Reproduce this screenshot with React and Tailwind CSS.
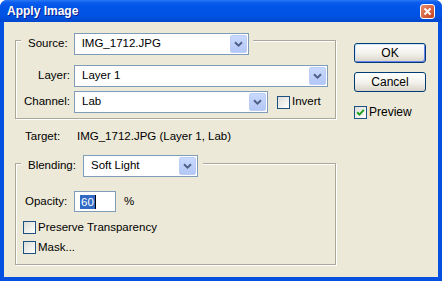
import React from 'react';

const Chevron = () => (
  <svg width="9" height="6" viewBox="0 0 9 6">
    <path d="M1 1.2 L4.5 4.6 L8 1.2" fill="none" stroke="#4d6185" strokeWidth="2" />
  </svg>
);

// XP style combo box with the blue drop button
const Combo = ({ value, className }) => (
  <div className={`flex h-[22px] items-stretch border border-[#7f9db9] bg-white p-[1px] ${className}`}>
    <span className="flex flex-1 items-center truncate pl-[6px] text-black">{value}</span>
    <span className="flex w-[17px] items-center justify-center rounded-[2px] border border-[#bccdf8] bg-gradient-to-b from-[#c9d9fd] to-[#b3c7f6]">
      <Chevron />
    </span>
  </div>
);

const Check = ({ checked }) => (
  <span className="flex h-[13px] w-[13px] shrink-0 items-center justify-center border border-[#1c5180] bg-gradient-to-br from-[#dcdcd7] to-white">
    {checked && (
      <svg width="9" height="9" viewBox="0 0 9 9">
        <path d="M1.2 4.2 L3.5 6.6 L7.8 1.8" fill="none" stroke="#21a121" strokeWidth="2" />
      </svg>
    )}
  </span>
);

const Button = ({ children, primary }) => (
  <button
    className={`flex h-[20px] w-[72px] items-center justify-center rounded-[3px] border border-[#003c74] bg-gradient-to-b from-white via-[#f4f3ee] to-[#d9d4c8] text-[12px] text-black ${
      primary ? 'shadow-[inset_1px_1px_0_#cee7ff,inset_-1px_-1px_0_#6982ee]' : ''
    }`}
  >
    {children}
  </button>
);

export default function App() {
  return (
    <div className="flex h-[281px] w-[442px] flex-col rounded-t-[7px] bg-[#0450e0] font-['Liberation_Sans',Arial,sans-serif] text-[11.5px] text-black">
      {/* title bar */}
      <div className="flex h-[22px] items-center rounded-t-[7px] bg-[linear-gradient(to_bottom,#2a78f5_0%,#0a5ced_12%,#0055e8_30%,#0053e3_70%,#0047cf_100%)] pl-[7px] pr-[7px]">
        <span className="flex-1 text-[12px] font-bold text-white [text-shadow:1px_1px_0_#0a1e8c]">Apply Image</span>
        <span className="flex h-[15px] w-[15px] items-center justify-center rounded-[3px] border border-white bg-gradient-to-br from-[#e88c6c] to-[#c4401d]">
          <svg width="9" height="9" viewBox="0 0 9 9">
            <path d="M1.5 1.5 L7.5 7.5 M7.5 1.5 L1.5 7.5" stroke="#fff" strokeWidth="1.8" />
          </svg>
        </span>
      </div>

      <div className="mx-[4px] mb-[4px] flex flex-1 bg-[#ece9d8]">
        {/* left column */}
        <div className="ml-[11px] flex w-[321px] flex-col">
          {/* source / layer / channel */}
          <div className="mt-[18px] border border-[#aca899] pb-[5px] shadow-[inset_1px_1px_0_#fff,1px_1px_0_#fff]">
            <div className="-mt-[8px] ml-[5px] flex w-fit items-center bg-[#ece9d8] pl-[7px] pr-[4px]">
              <span>Source:</span>
              <Combo value="IMG_1712.JPG" className="ml-[6px] w-[175px]" />
            </div>
            <div className="mt-[10px] flex items-center">
              <span className="w-[54px] text-right">Layer:</span>
              <Combo value="Layer 1" className="ml-[4px] w-[254px]" />
            </div>
            <div className="mt-[4px] flex items-center">
              <span className="w-[54px] text-right">Channel:</span>
              <Combo value="Lab" className="ml-[4px] w-[194px]" />
              <span className="ml-[9px]">
                <Check />
              </span>
              <span className="ml-[2px]">Invert</span>
            </div>
          </div>

          <div className="mt-[11px] flex h-[14px] items-center pl-[10px]">
            <span className="w-[52px]">Target:</span>
            <span>IMG_1712.JPG (Layer 1, Lab)</span>
          </div>

          {/* blending */}
          <div className="mt-[19px] border border-[#aca899] pb-[10px] shadow-[inset_1px_1px_0_#fff,1px_1px_0_#fff]">
            <div className="-mt-[9px] ml-[5px] flex w-fit items-center bg-[#ece9d8] pl-[7px] pr-[5px]">
              <span>Blending:</span>
              <Combo value="Soft Light" className="ml-[7px] w-[115px]" />
            </div>
            <div className="mt-[14px] flex h-[21px] items-center pl-[9px]">
              <span className="w-[49px]">Opacity:</span>
              <div className="flex h-[21px] w-[42px] items-center border border-[#7f9db9] bg-white pl-[5px]">
                <span className="bg-[#316ac5] px-[1px] leading-[14px] text-white">60</span>
                <span className="h-[14px] w-[1px] bg-black" />
              </div>
              <span className="ml-[8px]">%</span>
            </div>
            <div className="mt-[9px] flex items-center pl-[7px] leading-[13px]">
              <Check />
              <span className="ml-[2px]">Preserve Transparency</span>
            </div>
            <div className="mt-[7px] flex items-center pl-[7px] leading-[13px]">
              <Check />
              <span className="ml-[2px]">Mask...</span>
            </div>
          </div>
        </div>

        {/* right column */}
        <div className="ml-[18px] flex flex-col pt-[21px]">
          <Button primary>OK</Button>
          <div className="mt-[9px]">
            <Button>Cancel</Button>
          </div>
          <div className="mt-[14px] flex items-center leading-[13px]">
            <Check checked />
            <span className="ml-[2px] text-[12px]">Preview</span>
          </div>
        </div>
      </div>
    </div>
  );
}
